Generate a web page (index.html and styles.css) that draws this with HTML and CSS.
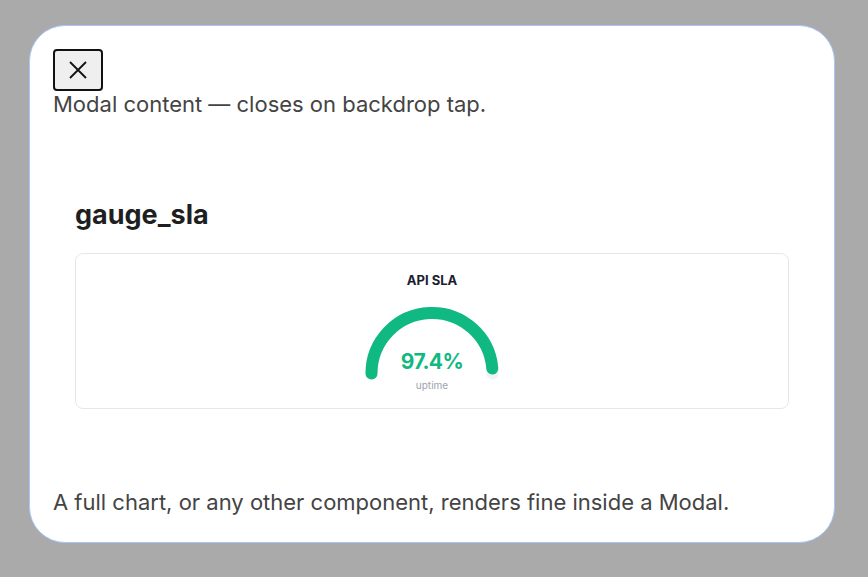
FILE: index.html
```html
<!DOCTYPE html>
<html>
<head>
    <link rel="stylesheet" href="styles.css">
</head>
<body>
    <div class="backdrop">
        <div class="modal">
            <button class="close-button" aria-label="Close">
                <svg width="18" height="18" viewBox="0 0 18 18">
                    <path d="M 1 1 L 17 17 M 17 1 L 1 17" stroke="#111" stroke-width="1.8" fill="none"/>
                </svg>
            </button>
            <p class="modal-text">Modal content — closes on backdrop tap.</p>

            <div class="demo">
                <h3 class="demo-title">gauge_sla</h3>
                <div class="chart-card">
                    <div class="chart-title">API SLA</div>
                    <div class="gauge">
                        <svg class="gauge-svg" width="146" height="80" viewBox="0 0 146 80">
                            <!-- track -->
                            <path d="M 12.5 72.5 A 60.5 60.5 0 0 1 133.5 72.5" fill="none" stroke="#f1f2f4" stroke-width="12" stroke-linecap="round"/>
                            <!-- value arc, 97.4% of the half circle -->
                            <path d="M 12.5 72.5 A 60.5 60.5 0 0 1 133.3 67.5" fill="none" stroke="#10b981" stroke-width="12" stroke-linecap="round"/>
                        </svg>
                        <div class="gauge-value">97.4%</div>
                        <div class="gauge-label">uptime</div>
                    </div>
                </div>
            </div>

            <p class="modal-text">A full chart, or any other component, renders fine inside a Modal.</p>
        </div>
    </div>
</body>
</html>
```

FILE: styles.css
```css
body {
    margin: 0;
    background-color: #aaaaaa;
    font-family: Inter, Roboto, sans-serif;
}

.backdrop {
    height: 100vh;
    padding: 25px 33px 34px 29px;
    box-sizing: border-box;
}

.modal {
    height: 100%;
    box-sizing: border-box;
    padding: 23px 23px;
    background-color: #fff;
    border: 1px solid #a8c7fa;
    border-radius: 36px;
}

.close-button {
    display: flex;
    align-items: center;
    justify-content: center;
    width: 50px;
    height: 42px;
    padding: 0;
    background-color: #efefef;
    border: 2px solid #111;
    border-radius: 4px;
}

.modal-text {
    margin: 0;
    font-size: 22px;
    line-height: 26px;
    color: #444;
}

.demo {
    padding: 82px 22px 80px;
}

.demo-title {
    margin: 0 0 22px;
    font-size: 27px;
    line-height: 32px;
    font-weight: 700;
    color: #1f1f1f;
}

.chart-card {
    border: 1px solid #e6e7eb;
    border-radius: 8px;
    padding: 17px 16px 17px;
    display: flex;
    flex-direction: column;
    align-items: center;
}

.chart-title {
    font-size: 13px;
    font-weight: 700;
    color: #1a1d2e;
    line-height: 18px;
}

.gauge {
    position: relative;
    margin-top: 12px;
    width: 146px;
    height: 90px;
}

.gauge-svg {
    display: block;
}

.gauge-value {
    position: absolute;
    left: 0;
    right: 0;
    top: 48px;
    text-align: center;
    font-size: 21px;
    font-weight: 700;
    letter-spacing: -0.6px;
    color: #10b981;
}

.gauge-label {
    position: absolute;
    left: 0;
    right: 0;
    top: 78px;
    text-align: center;
    font-size: 10px;
    color: #9ca3af;
}
```
